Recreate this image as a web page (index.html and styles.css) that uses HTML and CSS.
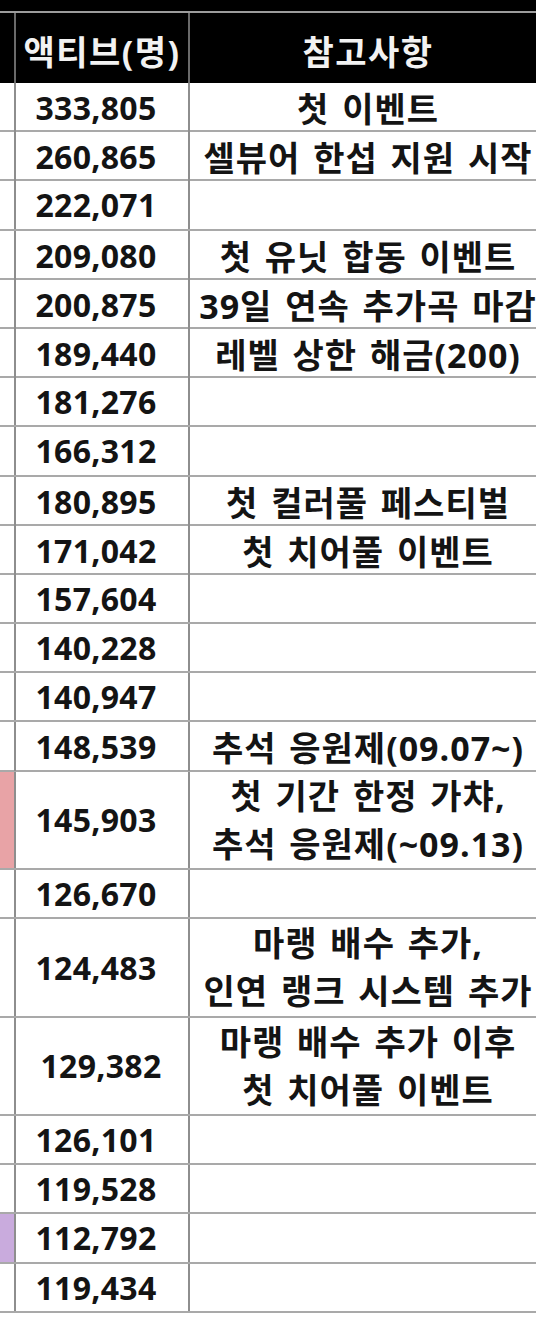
FILE: index.html
```html
<!DOCTYPE html>
<html lang="ko">
<head>
<meta charset="utf-8">
<link rel="stylesheet" href="styles.css">
</head>
<body>
<div class="sheet">
  <div class="topbar"></div>
  <div class="row head">
    <div class="c a"></div>
    <div class="c b">액티브(명)</div>
    <div class="c n">참고사항</div>
  </div>
  <div class="row"><div class="c a"></div><div class="c b num">333,805</div><div class="c n">첫 이벤트</div></div>
  <div class="row"><div class="c a"></div><div class="c b num">260,865</div><div class="c n">셀뷰어 한섭 지원 시작</div></div>
  <div class="row"><div class="c a"></div><div class="c b num">222,071</div><div class="c n"></div></div>
  <div class="row"><div class="c a"></div><div class="c b num">209,080</div><div class="c n">첫 유닛 합동 이벤트</div></div>
  <div class="row"><div class="c a"></div><div class="c b num">200,875</div><div class="c n">39일 연속 추가곡 마감</div></div>
  <div class="row"><div class="c a"></div><div class="c b num">189,440</div><div class="c n">레벨 상한 해금(200)</div></div>
  <div class="row"><div class="c a"></div><div class="c b num">181,276</div><div class="c n"></div></div>
  <div class="row"><div class="c a"></div><div class="c b num">166,312</div><div class="c n"></div></div>
  <div class="row"><div class="c a"></div><div class="c b num">180,895</div><div class="c n">첫 컬러풀 페스티벌</div></div>
  <div class="row"><div class="c a"></div><div class="c b num">171,042</div><div class="c n">첫 치어풀 이벤트</div></div>
  <div class="row"><div class="c a"></div><div class="c b num">157,604</div><div class="c n"></div></div>
  <div class="row"><div class="c a"></div><div class="c b num">140,228</div><div class="c n"></div></div>
  <div class="row"><div class="c a"></div><div class="c b num">140,947</div><div class="c n"></div></div>
  <div class="row"><div class="c a"></div><div class="c b num">148,539</div><div class="c n">추석 응원제(09.07~)</div></div>
  <div class="row tall"><div class="c a pink"></div><div class="c b num">145,903</div><div class="c n multi"><span>첫 기간 한정 가챠,</span><span>추석 응원제(~09.13)</span></div></div>
  <div class="row"><div class="c a"></div><div class="c b num">126,670</div><div class="c n"></div></div>
  <div class="row tall"><div class="c a"></div><div class="c b num">124,483</div><div class="c n multi"><span>마랭 배수 추가,</span><span>인연 랭크 시스템 추가</span></div></div>
  <div class="row tall"><div class="c a"></div><div class="c b num shift">129,382</div><div class="c n multi"><span>마랭 배수 추가 이후</span><span>첫 치어풀 이벤트</span></div></div>
  <div class="row"><div class="c a"></div><div class="c b num">126,101</div><div class="c n"></div></div>
  <div class="row"><div class="c a"></div><div class="c b num">119,528</div><div class="c n"></div></div>
  <div class="row"><div class="c a purple"></div><div class="c b num">112,792</div><div class="c n"></div></div>
  <div class="row"><div class="c a"></div><div class="c b num">119,434</div><div class="c n"></div></div>
</div>
</body>
</html>
```
FILE: styles.css
```css
html, body {
  margin: 0;
  padding: 0;
  background: #ffffff;
  overflow: hidden;
}
body {
  width: 536px;
  height: 1337px;
}
.sheet {
  width: 546px;
  font-family: "Open Sans", "Noto Sans CJK KR", sans-serif;
  font-weight: 700;
  color: #141414;
}
.topbar {
  height: 11px;
  background: #000;
  border-bottom: 2px solid #9c9c9c;
}
.row {
  display: grid;
  grid-template-columns: 16px 174px 356px;
  height: 49.2px;
  box-sizing: border-box;
  border-bottom: 2px solid #a9a9a9;
}
.row.tall {
  height: 98.4px;
}
.row.head {
  height: 70px;
  background: #000;
  color: #f2f2f2;
  border-bottom: none;
}
.c {
  display: flex;
  align-items: center;
  justify-content: center;
  white-space: nowrap;
  box-sizing: border-box;
  min-width: 0;
}
.head .c {
  padding-top: 4px;
}
.a, .b {
  border-right: 2px solid #8e8e8e;
}
.head .a, .head .b {
  border-right-color: #6a6a6a;
}
.b {
  font-size: 32px;
  letter-spacing: 0.3px;
}
.head .b {
  font-size: 34px;
  letter-spacing: 1.5px;
}
.num {
  padding-right: 12px;
}
.num.shift {
  padding-right: 2px;
}
.n {
  font-size: 34px;
  letter-spacing: 1px;
  word-spacing: 3px;
}
.head .n {
  letter-spacing: 1.5px;
  word-spacing: 0;
}
.multi {
  flex-direction: column;
  line-height: 48px;
}
.pink {
  background: #e8a3a6;
}
.purple {
  background: #c9abdd;
}
```
